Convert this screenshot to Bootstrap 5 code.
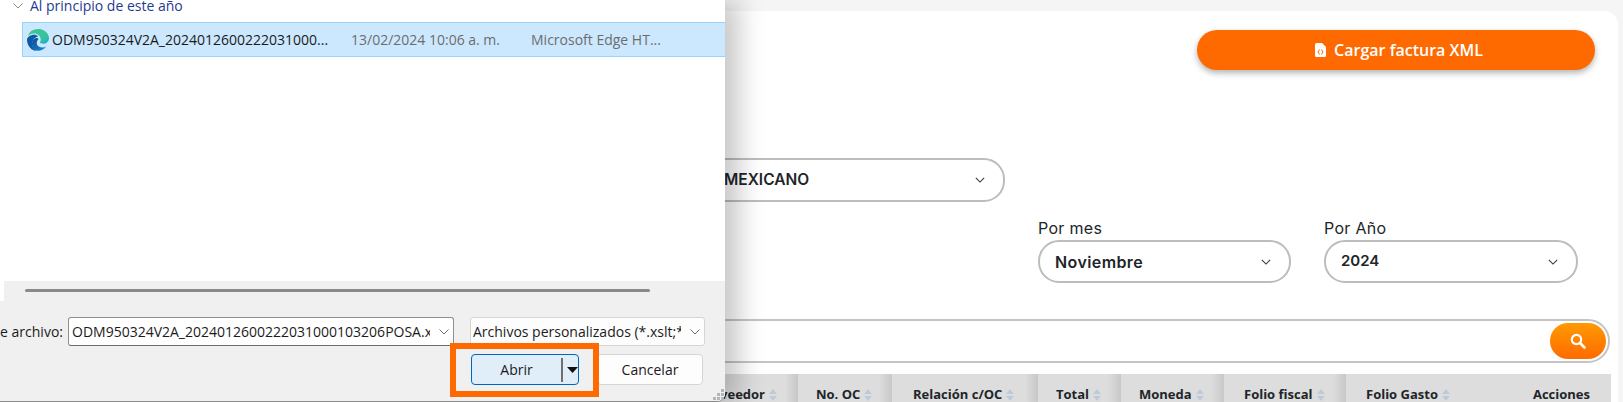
<!DOCTYPE html>
<html lang="es">
<head>
    <meta charset="UTF-8">
    <title>Cargar factura</title>
    <link href="https://cdn.jsdelivr.net/npm/bootstrap@5.3.3/dist/css/bootstrap.min.css" rel="stylesheet">
    <style>
        html, body { height: 402px; overflow: hidden; }
        body { background: #f5f5f5; font-family: "Inter", sans-serif; color: #212529; position: relative; }

        /* Page behind the dialog */
        .page-card { background: #fff; margin: 11px 5px 0 0; border-radius: 14px 14px 0 0; height: 391px; padding: 19px 0 0 0; }
        .btn-xml { width: 398px; height: 40px; margin-right: 23px; padding-left: 18px; background: #ff6a00; color: #fff; border: 0; border-radius: 20px;
            font-family: "Open Sans", sans-serif; font-weight: 600; font-size: 16px; box-shadow: 0 3px 6px rgba(0,0,0,.3); }
        .btn-xml:hover { background: #ff6a00; color: #fff; }
        .select-pill { height: 44px; border: 2px solid #bdbdbd; border-radius: 21px; background: #fff; padding: 0 18px 0 15px;
            font-weight: 600; font-size: 15px; color: #212529; }
        .select-pill svg { width: 10px; height: 6px; }
        .select-currency { width: 405px; margin-left: 600px; margin-top: 88px; padding-left: 122px; font-size: 15.5px; }
        .filter-label { font-size: 16px; line-height: 18px; margin-bottom: 3px; letter-spacing: .3px; }
        .select-month { width: 253px; height: 43px; }
        .select-year { width: 254px; height: 43px; }
        .month-text { font-size: 16px; letter-spacing: .4px; }
        .filters-right { margin-top: 17px; gap: 33px; padding-right: 40px; }
        .search-pill { height: 44px; margin: 36px 8px 0 0; border: 2px solid #c4c4c4; border-radius: 22px; padding-right: 2px; }
        .search-btn { width: 56px; height: 36px; border: 0; border-radius: 18px; background: linear-gradient(#ff9a00, #ff6a00); }
        .grid-head { width: 1611px; margin-top: 11px; border-collapse: collapse; table-layout: fixed; }
        .grid-head th { background: #dddddd; height: 36px; padding: 5px 0 0 18px; font-family: "Open Sans", sans-serif; font-weight: 700;
            font-size: 13px; color: #212529; white-space: nowrap; vertical-align: middle; }
        .grid-head th.sorted { background: linear-gradient(to right, #dddddd calc(100% - 13px), #c8c8c8); }
        .grid-head th.th-end { padding-right: 21px; text-align: right; }
        .grid-head th.th-wide { padding-left: 21px; }
        .grid-head th.th-mid { padding-left: 20px; }
        .col-prov { width: 798px; }
        .col-oc { width: 94px; }
        .col-rel { width: 146px; }
        .col-total { width: 83px; }
        .col-mon { width: 103px; }
        .col-fiscal { width: 122px; }
        .col-gasto { width: 165px; }
        .sort-mark { display: inline-block; width: 8px; height: 12px; margin-left: 4px; vertical-align: -2px; }

        /* Windows file dialog, floats above the page */
        .file-dialog { position: absolute; left: 0; top: 0; width: 725px; height: 402px; background: #fff;
            font-family: "Open Sans", sans-serif; font-size: 14px; color: #1b1b1b; border-bottom: 1px solid #8a8a8a;
            box-shadow: 14px 0 26px rgba(0,0,0,.22); border-bottom-right-radius: 8px; z-index: 5; }
        .group-title { height: 22px; padding-left: 13px; color: #1f3a93; font-size: 14px; line-height: 12px; gap: 7px; }
        .file-row { height: 35px; margin-left: 22px; background: #cce8ff; border: solid #99d1ff; border-width: 1px 0 1px 1px; padding-left: 4px; }
        .edge-logo { flex: none; margin-right: 3px; }
        .file-name { width: 299px; }
        .file-date { width: 180px; color: #6d6d6d; }
        .file-type { color: #6d6d6d; }
        .dialog-spacer { height: 224px; }
        .dialog-foot { height: 120px; background: #f0f0f0; border-bottom-right-radius: 8px; position: relative; }
        .dialog-foot::before { content: ""; position: absolute; left: 0; top: 0; width: 4px; height: 20px; background: #fff; }
        .scroll-thumb { height: 3px; width: 625px; margin-left: 25px; background: #8a8a8a; border-radius: 2px; position: relative; top: 8px; }
        .field-row { padding-top: 33px; }
        .field-label { width: 68px; text-align: right; white-space: nowrap; padding-right: 5px; line-height: 29px; }
        .win-input { height: 29px; background: #fff; border: 1px solid #8f8f8f; border-bottom-color: #6d6d6d; border-radius: 3px; line-height: 27px;
            padding: 0 4px 0 3px; white-space: nowrap; overflow: hidden; }
        .win-input svg, .win-select svg { flex: none; }
        .input-file { width: 386px; margin-right: 16px; }
        .input-file span { width: 358px; overflow: hidden; }
        .win-select { width: 235px; height: 29px; background: #fdfdfd; border: 1px solid #d5d5d5; border-radius: 3px; padding: 0 4px 0 2px; white-space: nowrap; overflow: hidden; }
        .win-select span { width: 208px; overflow: hidden; }
        .btn-row { padding-top: 8px; }
        .win-open { width: 108px; height: 31px; margin-left: 471px; background: #e0eef9; border: 1px solid #0067c0; border-radius: 4px; position: relative; }
        .win-open .open-text { width: 89px; text-align: center; }
        .win-open .split-line { width: 2px; height: 24px; background: #6f6f6f; }
        .win-cancel { width: 106px; height: 31px; margin-left: 18px; background: #fdfdfd; border: 1px solid #d5d5d5; border-radius: 4px; }
        .callout { position: absolute; left: 450px; top: 343px; width: 149px; height: 54px; border: 6px solid #ff6a00; z-index: 6; }
        .resize-grip { position: absolute; right: 1px; bottom: 1px; width: 11px; height: 11px; }
    </style>
</head>
<body>

    <!-- Page behind -->
    <div class="page-card">
        <div class="d-flex justify-content-end">
            <button class="btn btn-xml d-flex align-items-center justify-content-center gap-2" type="button">
                <svg width="11" height="14" viewBox="0 0 11 14"><path d="M0 1.500A1.500 1.500 0 0 1 1.500 0H7l4 4v8.500a1.500 1.500 0 0 1-1.500 1.500h-8A1.500 1.500 0 0 1 0 12.500z" fill="#fff"/><path d="M4.500 6.500 3 9l1.500 2.500M6.500 6.500 8 9l-1.500 2.500" stroke="#ff6a00" fill="none"/></svg>
                Cargar factura XML
            </button>
        </div>
        <div class="select-pill select-currency d-flex align-items-center justify-content-between">
            <span>MEXICANO</span>
            <svg viewBox="0 0 12 7"><path d="M1 1l5 5 5-5" fill="none" stroke="#343a40" stroke-width="1.3"/></svg>
        </div>
        <div class="d-flex justify-content-end filters-right">
            <div>
                <div class="filter-label">Por mes</div>
                <div class="select-pill select-month d-flex align-items-center justify-content-between">
                    <span class="month-text">Noviembre</span>
                    <svg viewBox="0 0 12 7"><path d="M1 1l5 5 5-5" fill="none" stroke="#343a40" stroke-width="1.3"/></svg>
                </div>
            </div>
            <div>
                <div class="filter-label">Por Año</div>
                <div class="select-pill select-year d-flex align-items-center justify-content-between">
                    <span>2024</span>
                    <svg viewBox="0 0 12 7"><path d="M1 1l5 5 5-5" fill="none" stroke="#343a40" stroke-width="1.3"/></svg>
                </div>
            </div>
        </div>
        <div class="search-pill d-flex align-items-center justify-content-end">
            <button class="search-btn d-flex align-items-center justify-content-center" type="button" aria-label="Buscar">
                <svg width="16" height="16" viewBox="0 0 16 16"><circle cx="6.500" cy="6.500" r="4.700" fill="none" stroke="#fff" stroke-width="2.200"/><path d="M10 10l4.500 4.500" stroke="#fff" stroke-width="2.600" stroke-linecap="round"/></svg>
            </button>
        </div>
        <table class="grid-head">
            <colgroup>
                <col class="col-prov"><col class="col-oc"><col class="col-rel"><col class="col-total">
                <col class="col-mon"><col class="col-fiscal"><col class="col-gasto"><col>
            </colgroup>
            <thead>
                <tr>
                    <th class="sorted th-end">Proveedor<svg class="sort-mark" viewBox="0 0 7 11"><path d="M3.500 0L7 4.500H0zM3.500 11L0 6.500h7z" fill="#bccada"/></svg></th>
                    <th class="sorted">No. OC<svg class="sort-mark" viewBox="0 0 7 11"><path d="M3.500 0L7 4.500H0zM3.500 11L0 6.500h7z" fill="#bccada"/></svg></th>
                    <th class="sorted th-wide">Relación c/OC<svg class="sort-mark" viewBox="0 0 7 11"><path d="M3.500 0L7 4.500H0zM3.500 11L0 6.500h7z" fill="#bccada"/></svg></th>
                    <th class="sorted">Total<svg class="sort-mark" viewBox="0 0 7 11"><path d="M3.500 0L7 4.500H0zM3.500 11L0 6.500h7z" fill="#bccada"/></svg></th>
                    <th class="sorted">Moneda<svg class="sort-mark" viewBox="0 0 7 11"><path d="M3.500 0L7 4.500H0zM3.500 11L0 6.500h7z" fill="#bccada"/></svg></th>
                    <th class="sorted th-mid">Folio fiscal<svg class="sort-mark" viewBox="0 0 7 11"><path d="M3.500 0L7 4.500H0zM3.500 11L0 6.500h7z" fill="#bccada"/></svg></th>
                    <th class="th-mid">Folio Gasto<svg class="sort-mark" viewBox="0 0 7 11"><path d="M3.500 0L7 4.500H0zM3.500 11L0 6.500h7z" fill="#bccada"/></svg></th>
                    <th class="th-end">Acciones</th>
                </tr>
            </thead>
        </table>
    </div>

    <!-- File dialog -->
    <div class="file-dialog">
        <div class="group-title d-flex">
            <svg width="10" height="12" viewBox="0 0 10 12"><path d="M.5 3.500L5 8l4.500-4.500" fill="none" stroke="#8a8a8a"/></svg>
            <span>Al principio de este año</span>
        </div>
        <div class="file-row d-flex align-items-center">
            <svg class="edge-logo" width="22" height="22" viewBox="0 0 16 16">
                <defs>
                    <linearGradient id="edgeTop" x1="0" y1="0" x2="1" y2="1"><stop offset="0" stop-color="#3ec98a"/><stop offset=".7" stop-color="#35c3a0"/><stop offset="1" stop-color="#1b9de2"/></linearGradient>
                    <linearGradient id="edgeLow" x1="0" y1="0" x2="1" y2="1"><stop offset="0" stop-color="#0c4f96"/><stop offset="1" stop-color="#1688d8"/></linearGradient>
                </defs>
                <path d="M9.482 9.341c-.069.062-.17.153-.17.309 0 .162.107.325.3.456.877.613 2.521.54 2.592.538h.002c.667 0 1.32-.18 1.894-.519A3.838 3.838 0 0 0 16 6.819c.018-1.316-.44-2.218-.666-2.664l-.04-.08C13.963 1.487 11.106 0 8 0A8 8 0 0 0 .473 5.290C1.488 4.048 3.183 3.262 5 3.262c2.830 0 5.010 1.885 5.010 4.797h-.004v.002c0 .338-.168.832-.487 1.244l.006-.006a.594.594 0 0 1-.043.041z" fill="url(#edgeTop)"/>
                <path d="M.01 7.753a8.137 8.137 0 0 0 .753 3.641 8 8 0 0 0 6.495 4.564 5.210 5.210 0 0 1-.785-.377h-.01l-.12-.075a5.450 5.450 0 0 1-1.560-1.463A5.543 5.543 0 0 1 6.810 5.800l.01-.004.025-.012c.208-.098.620-.292 1.167-.285.129.001.257.012.384.033a4.037 4.037 0 0 0-.993-.698l-.01-.005C6.348 4.282 5.199 4.263 5 4.263c-2.440 0-4.824 1.634-4.990 3.490z" fill="#0c59a4"/>
                <path d="M6.400 6.600A4.900 4.900 0 0 0 8 15.900a8 8 0 0 0 6-3.100c-1.500.9-4 .9-5.500-.1C7.200 11.800 6.800 10.400 7.300 9c.2-.7.700-1.300 1.200-1.700-.5-.4-1.300-.8-2.100-.7z" fill="url(#edgeLow)"/>
            </svg>
            <span class="file-name">ODM950324V2A_2024012600222031000...</span>
            <span class="file-date">13/02/2024 10:06 a. m.</span>
            <span class="file-type">Microsoft Edge HT...</span>
        </div>
        <div class="dialog-spacer"></div>
        <div class="dialog-foot">
            <div class="scroll-thumb"></div>
            <div class="field-row d-flex">
                <span class="field-label">e archivo:</span>
                <div class="win-input input-file d-flex align-items-center justify-content-between">
                    <span>ODM950324V2A_2024012600222031000103206POSA.xml</span>
                    <svg width="10" height="6" viewBox="0 0 10 6"><path d="M.5.5L5 5 9.500.5" fill="none" stroke="#6d6d6d"/></svg>
                </div>
                <div class="win-select d-flex align-items-center justify-content-between">
                    <span>Archivos personalizados (*.xslt;*.xml)</span>
                    <svg width="10" height="6" viewBox="0 0 10 6"><path d="M.5.5L5 5 9.500.5" fill="none" stroke="#6d6d6d"/></svg>
                </div>
            </div>
            <div class="btn-row d-flex">
                <div class="win-open d-flex align-items-center">
                    <span class="open-text">Abrir</span>
                    <span class="split-line"></span>
                    <svg class="ms-1" width="11" height="6" viewBox="0 0 11 6"><path d="M0 0h11L5.500 6z" fill="#111"/></svg>
                </div>
                <div class="win-cancel d-flex align-items-center justify-content-center">Cancelar</div>
            </div>
            <svg class="resize-grip" viewBox="0 0 11 11" fill="#b5b5b5"><rect x="8" y="0" width="3" height="3"/><rect x="4" y="4" width="3" height="3"/><rect x="8" y="4" width="3" height="3"/><rect x="0" y="8" width="3" height="3"/><rect x="4" y="8" width="3" height="3"/><rect x="8" y="8" width="3" height="3"/></svg>
        </div>
    </div>
    <div class="callout"></div>

</body>
</html>
